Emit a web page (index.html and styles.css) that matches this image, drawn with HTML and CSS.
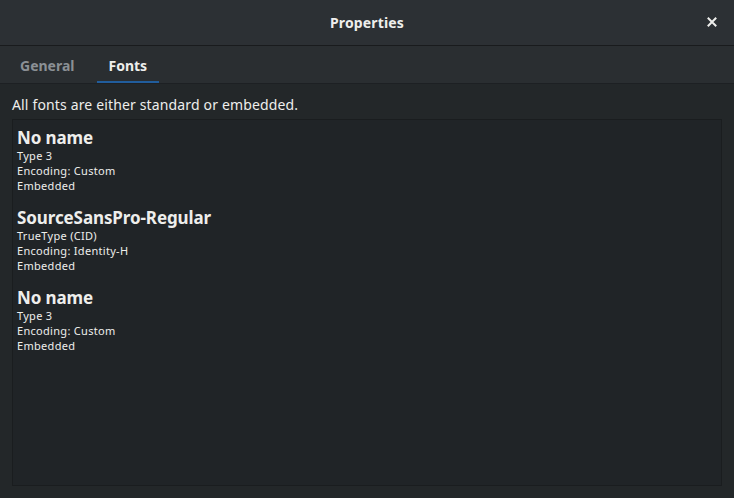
FILE: index.html
```html
<!DOCTYPE html>
<html>
<head>
<meta charset="utf-8">
<link rel="stylesheet" href="styles.css">
</head>
<body>
<div class="dialog">
  <header class="titlebar">
    <div class="title">Properties</div>
    <button class="close" aria-label="Close">
      <svg width="10" height="10" viewBox="0 0 10 10"><path d="M1.5 1.5 L8.5 8.5 M8.5 1.5 L1.5 8.5" stroke="#eeeeec" stroke-width="2" stroke-linecap="square"/></svg>
    </button>
  </header>
  <nav class="tabs">
    <div class="tab">General</div>
    <div class="tab active">Fonts</div>
  </nav>
  <main class="content">
    <p class="summary">All fonts are either standard or embedded.</p>
    <div class="list">
      <div class="font">
        <div class="name">No name</div>
        <div class="line">Type 3</div>
        <div class="line">Encoding: Custom</div>
        <div class="line">Embedded</div>
      </div>
      <div class="font">
        <div class="name">SourceSansPro-Regular</div>
        <div class="line">TrueType (CID)</div>
        <div class="line">Encoding: Identity-H</div>
        <div class="line">Embedded</div>
      </div>
      <div class="font">
        <div class="name">No name</div>
        <div class="line">Type 3</div>
        <div class="line">Encoding: Custom</div>
        <div class="line">Embedded</div>
      </div>
    </div>
  </main>
</div>
</body>
</html>
```
FILE: styles.css
```css
html, body {
  margin: 0;
  padding: 0;
  width: 734px;
  height: 498px;
  overflow: hidden;
  background: #232729;
  font-family: "Noto Sans", "Open Sans", sans-serif;
  color: #eeeeec;
}
.dialog {
  display: flex;
  flex-direction: column;
  height: 498px;
}
.titlebar {
  height: 46px;
  box-sizing: border-box;
  background: #2c3034;
  border-bottom: 1px solid #191b1d;
  display: flex;
  align-items: center;
  justify-content: center;
  position: relative;
}
.title {
  font-size: 14px;
  font-weight: bold;
  letter-spacing: 0.15px;
  color: #eeeeec;
}
.close {
  position: absolute;
  right: 17px;
  top: 17px;
  width: 10px;
  height: 10px;
  padding: 0;
  border: none;
  background: none;
  display: flex;
}
.tabs {
  height: 38px;
  box-sizing: border-box;
  background: #2a2e31;
  border-bottom: 1px solid #1d2023;
  display: flex;
  padding-left: 8px;
  gap: 10px;
}
.tab {
  font-size: 14px;
  font-weight: bold;
  color: #8b9095;
  padding: 4px 12px 0;
  display: flex;
  align-items: center;
  border-bottom: 2px solid transparent;
}
.tab.active {
  color: #eeeeec;
  border-bottom-color: #215d9c;
}
.content {
  flex: 1;
  display: flex;
  flex-direction: column;
  padding: 0 12px 12px;
}
.summary {
  margin: 0;
  height: 35px;
  box-sizing: border-box;
  padding-top: 6px;
  display: flex;
  align-items: center;
  font-size: 14px;
  letter-spacing: 0.15px;
  color: #eeeeec;
}
.list {
  flex: 1;
  background: #202427;
  border: 1px solid #1a1d1f;
  padding: 8px 4px;
  display: flex;
  flex-direction: column;
}
.font {
  margin-bottom: 15px;
}
.name {
  font-size: 17px;
  font-weight: bold;
  line-height: 20px;
  letter-spacing: -0.1px;
}
.line {
  font-size: 11px;
  line-height: 15px;
  letter-spacing: 0.3px;
}
```
